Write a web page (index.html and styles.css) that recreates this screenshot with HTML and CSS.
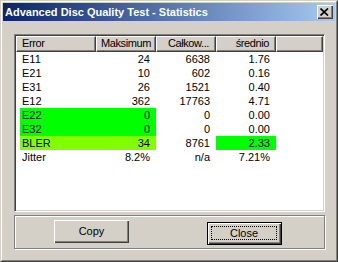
FILE: index.html
```html
<!DOCTYPE html>
<html>
<head>
<meta charset="utf-8">
<link rel="stylesheet" href="styles.css">
</head>
<body>
<div class="win">
  <div class="win-in">
    <div class="titlebar">
      <span class="title">Advanced Disc Quality Test - Statistics</span>
      <span class="cap-btn"><svg width="9" height="8" viewBox="0 0 9 8"><path d="M0.5 0.5 L8 7.5 M8 0.5 L0.5 7.5" stroke="#000" stroke-width="1.7" fill="none"/></svg></span>
    </div>
    <div class="client">
      <div class="listview">
        <div class="lv-head">
          <div class="hd left">Error</div>
          <div class="hd">Maksimum</div>
          <div class="hd">Całkow...</div>
          <div class="hd">średnio</div>
          <div class="hd fill"></div>
        </div>
        <div class="lv-body">
          <div class="row"><div class="c c1">E11</div><div class="c">24</div><div class="c">6638</div><div class="c">1.76</div></div>
          <div class="row"><div class="c c1">E21</div><div class="c">10</div><div class="c">602</div><div class="c">0.16</div></div>
          <div class="row"><div class="c c1">E31</div><div class="c">26</div><div class="c">1521</div><div class="c">0.40</div></div>
          <div class="row"><div class="c c1">E12</div><div class="c">362</div><div class="c">17763</div><div class="c">4.71</div></div>
          <div class="row"><div class="c c1 g">E22</div><div class="c g">0</div><div class="c">0</div><div class="c">0.00</div></div>
          <div class="row"><div class="c c1 g">E32</div><div class="c g">0</div><div class="c">0</div><div class="c">0.00</div></div>
          <div class="row"><div class="c c1 lg">BLER</div><div class="c lg">34</div><div class="c">8761</div><div class="c g">2.33</div></div>
          <div class="row"><div class="c c1">Jitter</div><div class="c">8.2%</div><div class="c">n/a</div><div class="c">7.21%</div></div>
        </div>
      </div>
      <div class="group">
        <div class="btn">Copy</div>
        <div class="btn def"><span class="focus">Close</span></div>
      </div>
    </div>
  </div>
</div>
</body>
</html>
```
FILE: styles.css
```css
html, body {
  margin: 0;
  padding: 0;
  background: #d4d0c8;
}
body {
  font-family: "Liberation Sans", Arial, sans-serif;
  font-size: 11px;
  color: #000;
}
.win {
  width: 338px;
  height: 262px;
  box-sizing: border-box;
  border: 1px solid;
  border-color: #d4d0c8 #404040 #404040 #d4d0c8;
  background: #d4d0c8;
}
.win-in {
  height: 100%;
  box-sizing: border-box;
  border: 1px solid;
  border-color: #fff #808080 #808080 #fff;
  padding: 1px;
  display: flex;
  flex-direction: column;
}
.titlebar {
  height: 18px;
  background: linear-gradient(to right, #0a246a, #a6caf0);
  display: flex;
  align-items: center;
  justify-content: space-between;
  padding: 0 2px 0 2px;
}
.title {
  color: #fff;
  font-weight: bold;
  font-size: 11px;
  white-space: nowrap;
}
.cap-btn {
  width: 16px;
  height: 14px;
  box-sizing: border-box;
  background: #d4d0c8;
  box-shadow: inset 1px 1px 0 #fff, inset -1px -1px 0 #404040, inset -2px -2px 0 #808080;
  display: flex;
  align-items: center;
  justify-content: center;
  padding: 0 1px 1px 0;
}
.cap-btn svg { display: block; }
.client {
  flex: 1;
  display: flex;
  flex-direction: column;
  padding: 13px 10px 10px 11px;
}
.listview {
  height: 178px;
  box-sizing: border-box;
  border: 1px solid;
  border-color: #808080 #fff #fff #808080;
  box-shadow: inset 1px 1px 0 #404040, inset -1px -1px 0 #d4d0c8;
  background: #fff;
  padding: 1px;
  display: flex;
  flex-direction: column;
}
.lv-head {
  display: grid;
  grid-template-columns: 80px 60px 60px 60px 1fr;
  height: 16px;
}
.hd {
  box-sizing: border-box;
  background: #d4d0c8;
  border-top: 1px solid #fff;
  border-left: 1px solid #fff;
  border-right: 1px solid #404040;
  border-bottom: 1px solid #404040;
  box-shadow: inset -1px -1px 0 #808080;
  text-align: right;
  padding: 0 6px 0 4px;
  line-height: 13px;
  white-space: nowrap;
  overflow: hidden;
  letter-spacing: -0.4px;
}
.hd.left { text-align: left; padding-left: 5px; }
.lv-body {
  flex: 1;
  background: #fff;
}
.row {
  display: grid;
  grid-template-columns: 80px 60px 60px 60px;
  height: 14px;
  line-height: 14px;
}
.c {
  text-align: right;
  padding-right: 6px;
  white-space: nowrap;
}
.c1 {
  text-align: left;
  margin-left: 4px;
  padding-left: 2px;
  padding-right: 0;
}
.g { background: #00ff00; }
.lg { background: #80ff00; }
.group {
  margin-top: 3px;
  height: 34px;
  box-sizing: border-box;
  border: 1px solid #808080;
  box-shadow: inset 1px 1px 0 #fff, 1px 1px 0 #fff;
  display: flex;
  align-items: flex-start;
  padding: 4px 0 0 39px;
  gap: 78px;
}
.btn {
  width: 75px;
  height: 23px;
  box-sizing: border-box;
  box-shadow: inset 1px 1px 0 #fff, inset -1px -1px 0 #404040, inset -2px -2px 0 #808080;
  display: flex;
  align-items: center;
  justify-content: center;
  padding-bottom: 1px;
}
.btn.def {
  margin-top: 2px;
  border: 1px solid #000;
  box-shadow: inset 1px 1px 0 #fff, inset -1px -1px 0 #404040, inset -2px -2px 0 #808080;
  padding: 3px 4px 4px 3px;
}
.focus {
  flex: 1;
  align-self: stretch;
  border: 1px dotted #000;
  display: flex;
  align-items: center;
  justify-content: center;
}
```
